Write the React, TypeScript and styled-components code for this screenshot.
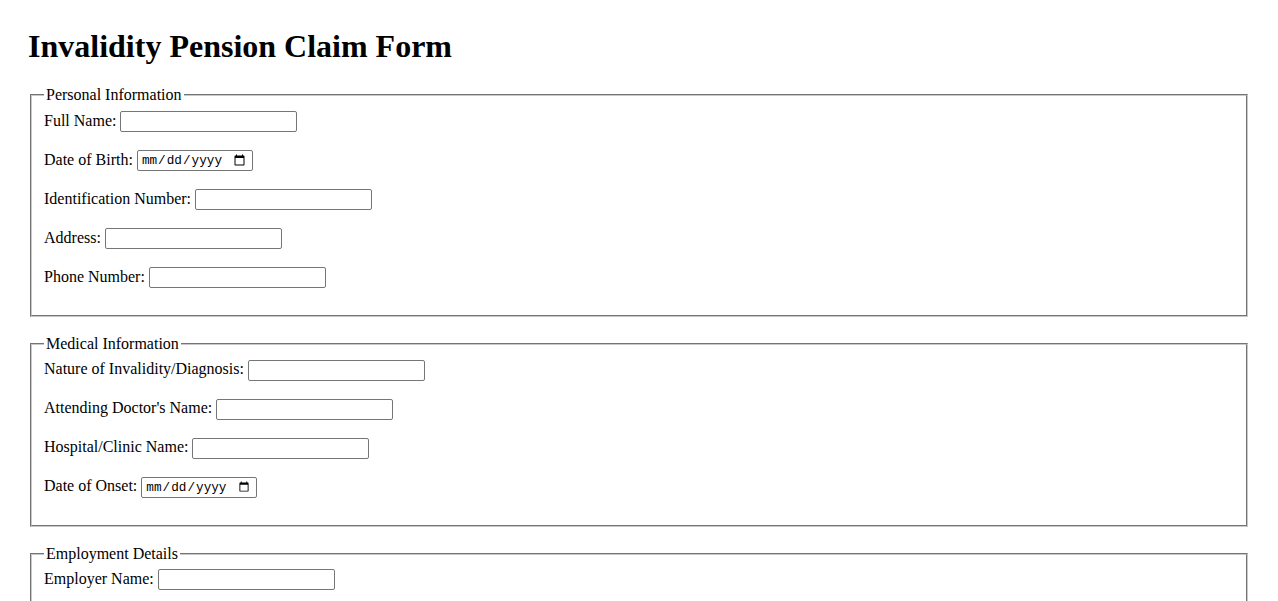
import styled, { createGlobalStyle } from "styled-components";

const GlobalStyle = createGlobalStyle`
  body {
    margin: 8px;
    font-family: "Liberation Serif", "Times New Roman", serif;
    font-size: 16px;
    color: #000;
    background: #fff;
  }
`;

const Page = styled.div`
  padding: 20px;
`;

const Title = styled.h1`
  font-size: 32px;
  font-weight: bold;
  margin: 0 0 21.44px;
  line-height: normal;
`;

const Section = styled.fieldset`
  margin: 0 2px 18px;
  padding: 0.35em 0.75em 0.625em;
  border: 2px groove rgb(200, 200, 200);
`;

const Legend = styled.legend`
  padding: 0 2px;
`;

const Row = styled.div`
  display: flex;
  align-items: center;
  gap: 4px;
  height: 23px;
  margin-bottom: 16px;
`;

const Label = styled.label`
  white-space: nowrap;
  padding-bottom: 2px;
`;

const TextInput = styled.input`
  box-sizing: border-box;
  width: 177px;
  height: 21px;
  padding: 1px 2px;
  border: 1px solid #767676;
  border-radius: 2px;
  font-family: "Liberation Sans", Arial, sans-serif;
  font-size: 13.33px;
  background: #fff;
`;

const DateInput = styled(TextInput).attrs({ type: "date" })`
  width: 116px;
  padding: 1px 4px 1px 3px;
  font-family: "Liberation Mono", "Courier New", monospace;
  font-size: 12.7px;
`;

type Field = { id: string; label: string; kind?: "date" };

const sections: { title: string; fields: Field[] }[] = [
  {
    title: "Personal Information",
    fields: [
      { id: "fullName", label: "Full Name:" },
      { id: "dob", label: "Date of Birth:", kind: "date" },
      { id: "idNumber", label: "Identification Number:" },
      { id: "address", label: "Address:" },
      { id: "phone", label: "Phone Number:" },
    ],
  },
  {
    title: "Medical Information",
    fields: [
      { id: "diagnosis", label: "Nature of Invalidity/Diagnosis:" },
      { id: "doctor", label: "Attending Doctor's Name:" },
      { id: "hospital", label: "Hospital/Clinic Name:" },
      { id: "onset", label: "Date of Onset:", kind: "date" },
    ],
  },
  {
    title: "Employment Details",
    fields: [{ id: "employer", label: "Employer Name:" }],
  },
];

export default function App() {
  return (
    <Page>
      <GlobalStyle />
      <Title>Invalidity Pension Claim Form</Title>
      <form>
        {sections.map((s) => (
          <Section key={s.title}>
            <Legend>{s.title}</Legend>
            {s.fields.map((f) => (
              <Row key={f.id}>
                <Label htmlFor={f.id}>{f.label}</Label>
                {f.kind === "date" ? (
                  <DateInput id={f.id} />
                ) : (
                  <TextInput id={f.id} type="text" />
                )}
              </Row>
            ))}
          </Section>
        ))}
      </form>
    </Page>
  );
}
